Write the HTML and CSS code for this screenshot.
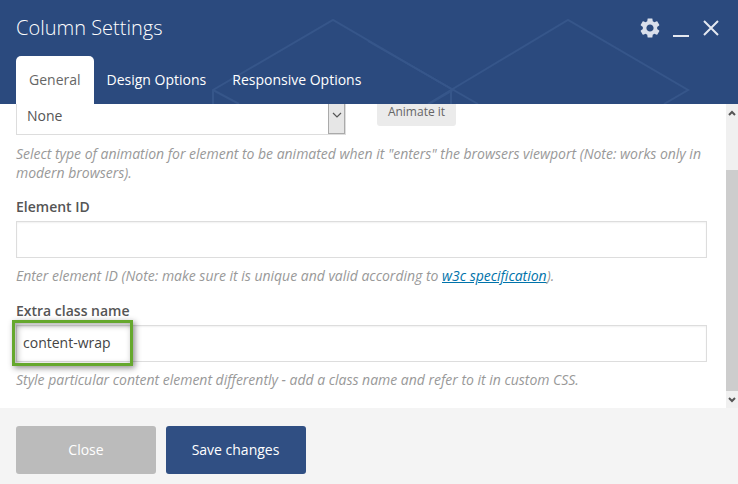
FILE: index.html
```html
<!DOCTYPE html>
<html lang="en">
<head>
<meta charset="utf-8">
<title>Column Settings</title>
<link rel="stylesheet" href="styles.css">
</head>
<body>
<div class="modal">
  <header class="head">
    <svg class="pattern" width="738" height="104" viewBox="0 0 738 104" fill="none" stroke="#36568a" stroke-width="2">
      <path d="M213 104V90L333 20L453 90L429 104"/>
      <path d="M213 90L239 104"/>
      <path d="M368 41L478 104"/>
      <path d="M428 104L451 90L568 20L688 90L664 104"/>
      <path d="M451 90V104"/>
    </svg>
    <div class="title-row">
      <h1 class="title">Column Settings</h1>
      <div class="controls">
        <svg class="gear" width="20" height="20" viewBox="2.4 2 19.2 20"><path fill="#d9dfeb" d="M19.14 12.94c.04-.3.06-.61.06-.94 0-.32-.02-.64-.07-.94l2.03-1.58c.18-.14.23-.41.12-.61l-1.92-3.32c-.12-.22-.37-.29-.59-.22l-2.39.96c-.5-.38-1.03-.7-1.62-.94l-.36-2.54c-.04-.24-.24-.41-.48-.41h-3.84c-.24 0-.43.17-.47.41l-.36 2.54c-.59.24-1.13.57-1.62.94l-2.39-.96c-.22-.08-.47 0-.59.22L2.74 8.87c-.12.21-.08.47.12.61l2.03 1.58c-.05.3-.09.63-.09.94s.02.64.07.94l-2.03 1.58c-.18.14-.23.41-.12.61l1.92 3.32c.12.22.37.29.59.22l2.39-.96c.5.38 1.03.7 1.62.94l.36 2.54c.05.24.24.41.48.41h3.84c.24 0 .44-.17.47-.41l.36-2.54c.59-.24 1.13-.56 1.62-.94l2.39.96c.22.08.47 0 .59-.22l1.92-3.32c.12-.22.07-.47-.12-.61l-2.01-1.58zM12 15.6c-1.98 0-3.6-1.62-3.6-3.6s1.62-3.6 3.6-3.6 3.6 1.62 3.6 3.6-1.62 3.6-3.6 3.6z"/></svg>
        <span class="minimize"></span>
        <svg class="close" width="16" height="16" viewBox="0 0 16 16"><path d="M1 1L15 15M15 1L1 15" stroke="#e4e8f0" stroke-width="2" fill="none"/></svg>
      </div>
    </div>
    <nav class="tabs">
      <a class="tab active">General</a>
      <a class="tab">Design Options</a>
      <a class="tab">Responsive Options</a>
    </nav>
  </header>
  <main class="body">
    <div class="content">
      <div class="anim-row">
        <div class="select"><span>None</span><span class="select-btn"><svg width="10" height="6" viewBox="0 0 10 6"><path d="M1 1L5 5L9 1" stroke="#555" stroke-width="1.200" fill="none"/></svg></span></div>
        <button class="animate">Animate it</button>
      </div>
      <p class="help first">Select type of animation for element to be animated when it "enters" the browsers viewport (Note: works only in modern browsers).</p>
      <label class="label id-label">Element ID</label>
      <div class="input"></div>
      <p class="help">Enter element ID (Note: make sure it is unique and valid according to <a class="link">w3c specification</a>).</p>
      <label class="label class-label">Extra class name</label>
      <div class="input filled">content-wrap<span class="highlight"></span></div>
      <p class="help">Style particular content element differently - add a class name and refer to it in custom CSS.</p>
    </div>
    <div class="scrollbar">
      <span class="arrow"><svg width="8" height="6" viewBox="0 0 8 6"><path d="M1 5L4 2L7 5" stroke="#555" stroke-width="2" fill="none"/></svg></span>
      <span class="track"><span class="thumb"></span></span>
      <span class="arrow"><svg width="8" height="6" viewBox="0 0 8 6"><path d="M1 1L4 4L7 1" stroke="#555" stroke-width="2" fill="none"/></svg></span>
    </div>
  </main>
  <footer class="foot">
    <button class="btn grey">Close</button>
    <button class="btn blue">Save changes</button>
  </footer>
</div>
</body>
</html>
```
FILE: styles.css
```css
* { box-sizing: border-box; }
html, body { margin: 0; padding: 0; }
body { width: 738px; height: 484px; overflow: hidden; font-family: "Open Sans", sans-serif; font-size: 14px; color: #555; background: #fff; }
.modal { display: flex; flex-direction: column; height: 484px; }
.head { position: relative; height: 104px; flex: none; background: #2b4a7e; overflow: hidden; }
.pattern { position: absolute; left: 0; top: 0; }
.title-row { position: relative; display: flex; justify-content: space-between; align-items: center; height: 56px; padding: 0 19px 0 16px; }
.title { margin: 0; font-size: 20px; font-weight: 300; color: #fff; line-height: 56px; }
.controls { display: flex; align-items: center; gap: 13px; }
.minimize { display: block; width: 16px; height: 2px; background: #e4e8f0; margin-top: 16px; }
.gear { display: block; }
.close { display: block; margin-left: 1px; }
.tabs { position: relative; display: flex; padding-left: 16px; }
.tab { display: block; height: 48px; padding: 0 13px; line-height: 48px; color: #fff; font-size: 14px; }
.tab.active { background: #fff; color: #666; border-radius: 5px 5px 0 0; }
.body { flex: 1; min-height: 0; display: flex; overflow: hidden; background: #fff; }
.content { flex: 1; min-width: 0; padding: 0 19px 0 16px; }
.anim-row { display: flex; align-items: flex-start; gap: 31px; margin-top: -8px; }
.select { display: flex; justify-content: space-between; align-items: center; width: 330px; height: 39px; padding-left: 10px; border: 1px solid #ddd; color: #555; }
.select span:first-child { padding-bottom: 1px; }
.select-btn { display: flex; align-items: center; justify-content: center; width: 17px; height: 37px; background: #e6e6e6; border: 1px solid #aaa; border-top: 0; }
.animate { height: 30px; width: 79px; padding: 1px 0 0; border: 0; border-radius: 3px; background: #ebebeb; font: 12px "Open Sans", sans-serif; color: #666; }
.help { margin: 0; font-style: italic; font-size: 14px; line-height: 20px; letter-spacing: -0.016px; color: #999; }
.help.first { margin-top: 9px; line-height: 19px; }
.label { display: block; font-weight: 600; font-size: 14px; line-height: 20px; color: #555; }
.id-label { margin-top: 15px; margin-bottom: 4px; }
.class-label { margin-top: 15px; margin-bottom: 4px; }
.input { position: relative; height: 37px; border: 1px solid #ddd; box-shadow: inset 0 1px 2px rgba(0,0,0,.06); margin-bottom: 8px; }
.input.filled { padding-left: 6px; line-height: 33px; color: #444; }
.highlight { position: absolute; left: -5px; top: -6px; width: 121px; height: 46px; border: 3px solid #65a82d; box-shadow: 2px 2px 6px rgba(0,0,0,.45), inset 2px 2px 6px rgba(0,0,0,.35); }
.link { color: #0073aa; text-decoration: underline; font-weight: 400; }
.scrollbar { flex: none; width: 12px; display: flex; flex-direction: column; background: #f0f0f0; }
.arrow { flex: none; height: 17px; display: flex; align-items: center; justify-content: center; }
.track { flex: 1; display: flex; flex-direction: column; justify-content: flex-end; }
.thumb { display: block; height: 221px; background: #cdcdcd; }
.foot { flex: none; height: 76px; display: flex; gap: 10px; padding: 18px 16px 0; background: #f4f4f4; }
.btn { width: 140px; height: 48px; padding: 0 0 2px; border: 0; border-radius: 3px; font: 14px "Open Sans", sans-serif; color: #fff; }
.btn.grey { background: #bbb; }
.btn.blue { background: #304f83; padding-right: 1px; }
```
